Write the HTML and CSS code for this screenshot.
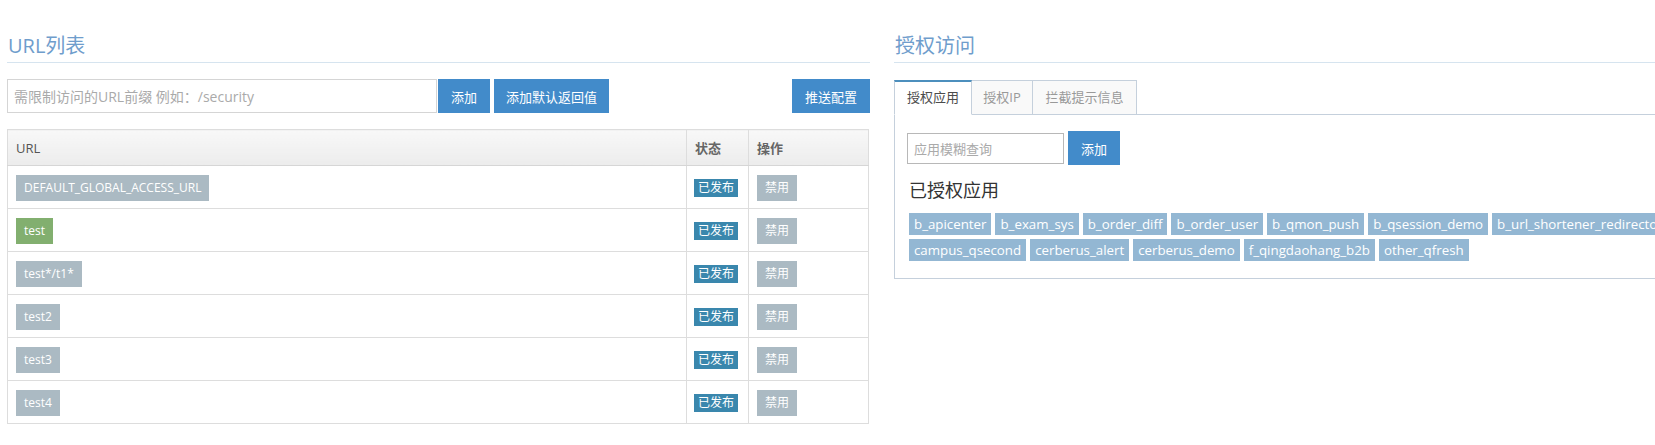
FILE: index.html
```html
<!DOCTYPE html>
<html lang="zh-CN">
<head>
<meta charset="utf-8">
<title>URL列表</title>
<link rel="stylesheet" href="styles.css">
</head>
<body>
<div class="page">
  <section class="col">
    <h3 class="header">URL列表</h3>
    <div class="toolbar">
      <input class="url-input" type="text" placeholder="需限制访问的URL前缀 例如：/security">
      <button class="btn btn-primary btn-add">添加</button>
      <button class="btn btn-primary">添加默认返回值</button>
      <span class="spacer"></span>
      <button class="btn btn-primary">推送配置</button>
    </div>
    <table class="tbl">
      <thead>
        <tr>
          <th class="c-url">URL</th>
          <th class="c-status cjk-bold">状态</th>
          <th class="c-op cjk-bold">操作</th>
        </tr>
      </thead>
      <tbody>
        <tr><td><span class="lbl lbl-grey">DEFAULT_GLOBAL_ACCESS_URL</span></td><td><span class="badge">已发布</span></td><td><span class="btn-dis">禁用</span></td></tr>
        <tr><td><span class="lbl lbl-green">test</span></td><td><span class="badge">已发布</span></td><td><span class="btn-dis">禁用</span></td></tr>
        <tr><td><span class="lbl lbl-grey">test*/t1*</span></td><td><span class="badge">已发布</span></td><td><span class="btn-dis">禁用</span></td></tr>
        <tr><td><span class="lbl lbl-grey">test2</span></td><td><span class="badge">已发布</span></td><td><span class="btn-dis">禁用</span></td></tr>
        <tr><td><span class="lbl lbl-grey">test3</span></td><td><span class="badge">已发布</span></td><td><span class="btn-dis">禁用</span></td></tr>
        <tr><td><span class="lbl lbl-grey">test4</span></td><td><span class="badge">已发布</span></td><td><span class="btn-dis">禁用</span></td></tr>
      </tbody>
    </table>
  </section>
  <section class="col">
    <h3 class="header">授权访问</h3>
    <ul class="tabs">
      <li class="tab active">授权应用</li>
      <li class="tab">授权IP</li>
      <li class="tab">拦截提示信息</li>
    </ul>
    <div class="tab-content">
      <div class="search-row">
        <input class="app-input" type="text" placeholder="应用模糊查询">
        <button class="btn btn-primary btn-add">添加</button>
      </div>
      <h4 class="sub">已授权应用</h4>
      <div class="tags">
        <span class="tag">b_apicenter</span>
        <span class="tag">b_exam_sys</span>
        <span class="tag">b_order_diff</span>
        <span class="tag">b_order_user</span>
        <span class="tag">b_qmon_push</span>
        <span class="tag">b_qsession_demo</span>
        <span class="tag">b_url_shortener_redirector</span>
        <span class="tag">campus_qsecond</span>
        <span class="tag">cerberus_alert</span>
        <span class="tag">cerberus_demo</span>
        <span class="tag">f_qingdaohang_b2b</span>
        <span class="tag">other_qfresh</span>
      </div>
    </div>
  </section>
</div>
</body>
</html>
```

FILE: styles.css
```css
html, body {
  margin: 0;
  padding: 0;
  background: #fff;
  overflow: hidden;
}
body {
  font-family: "Open Sans", "Noto Sans CJK SC", sans-serif;
  font-size: 13px;
  color: #393939;
}
.page {
  display: flex;
  gap: 24px;
  padding: 0 0 0 7px;
  width: 1760px;
}
.col {
  width: 863px;
  flex: none;
}
.header {
  margin: 32px 0 0;
  padding: 0 0 2px 1px;
  font-size: 20px;
  line-height: 28px;
  font-weight: 400;
  color: #6f9dcc;
  border-bottom: 1px solid #d6e4ef;
}
.toolbar {
  display: flex;
  align-items: stretch;
  margin-top: 16px;
  height: 34px;
}
.url-input {
  width: 430px;
  box-sizing: border-box;
  border: 1px solid #d5d5d5;
  padding: 0 6px;
  font: 14px "Open Sans", "Noto Sans CJK SC", sans-serif;
  color: #858585;
  outline: none;
}
.url-input::placeholder, .app-input::placeholder {
  color: #aaa;
}
.btn {
  border: none;
  font: 13px "Noto Sans CJK SC", sans-serif;
  color: #fff;
  padding: 0 12px;
  margin: 0;
  cursor: pointer;
}
.btn-primary {
  background: #428bca;
}
.toolbar .btn-add {
  margin-left: 1px;
  margin-right: 4px;
  width: 52px;
}
.toolbar .btn {
  height: 34px;
}
.spacer {
  flex: 1;
}
.toolbar .btn:last-child {
  width: 78px;
  padding: 0;
}
.tbl {
  margin-top: 16px;
  width: 862px;
  border-collapse: collapse;
  border: 1px solid #ddd;
}
.tbl th {
  height: 35px;
  padding: 0 8px;
  text-align: left;
  font-weight: 400;
  color: #555;
  background: linear-gradient(#f8f8f8, #ececec);
  border: 1px solid #ddd;
  border-bottom: 1px solid #d6d6d6;
}
.tbl th.cjk-bold {
  font-weight: 700;
  color: #666;
}
.c-status { width: 45px; }
.c-op { width: 103px; }
.tbl td {
  height: 43px;
  box-sizing: border-box;
  padding: 1px 8px 0 8px;
  border: 1px solid #ddd;
  vertical-align: middle;
}
.tbl td:nth-child(2) { padding-left: 7px; }
.lbl {
  display: inline-block;
  height: 26px;
  line-height: 26px;
  padding: 0 8px;
  font-size: 12px;
  color: #fff;
}
.lbl-grey { background: #abbac3; }
.lbl-green { background: #82af6f; }
.badge {
  display: inline-block;
  height: 18px;
  line-height: 18px;
  padding: 0 4px;
  font-size: 12px;
  color: #fff;
  background: #3a87ad;
  margin-top: -2px;
}
.btn-dis {
  display: inline-block;
  width: 40px;
  height: 26px;
  line-height: 26px;
  text-align: center;
  font-size: 12px;
  color: #fff;
  background: #abbac3;
}
.tabs {
  list-style: none;
  margin: 17px 0 0;
  padding: 0;
  display: flex;
  height: 35px;
}
.tab {
  box-sizing: border-box;
  height: 35px;
  line-height: 33px;
  padding: 0 12px;
  color: #999;
  background: #f9f9f9;
  border: 1px solid #c5d0dc;
  border-left: none;
  font-size: 13px;
}
.tab:first-child {
  border-left: 1px solid #c5d0dc;
}
.tab.active {
  width: 78px;
  padding: 0;
  text-align: center;
  color: #4c4c4c;
  background: #fff;
  border-top: 2px solid #4c8fbd;
  border-bottom-color: #fff;
  line-height: 31px;
}
.tab:nth-child(2) { width: 61px; padding: 0; text-align: center; }
.tab:nth-child(3) { width: 104px; padding: 0; text-align: center; }
.tab-content {
  margin-top: -1px;
  border: 1px solid #c5d0dc;
  padding: 16px 14px 17px 12px;
}
.search-row {
  display: flex;
  align-items: center;
  height: 34px;
}
.app-input {
  width: 157px;
  height: 31px;
  box-sizing: border-box;
  border: 1px solid #b8b8b8;
  padding: 0 6px;
  font: 13px "Noto Sans CJK SC", sans-serif;
  margin-right: 4px;
  outline: none;
}
.search-row .btn {
  height: 34px;
  width: 52px;
  padding: 0;
}
.sub {
  margin: 12px 0 0 2px;
  font-size: 18px;
  line-height: 26px;
  font-weight: 400;
  color: #333;
}
.tags {
  margin: 10px 0 0 2px;
  display: flex;
  flex-wrap: wrap;
  gap: 4px;
}
.tag {
  display: inline-block;
  height: 22px;
  line-height: 22px;
  padding: 0 5px;
  font-size: 13.3px;
  color: #fff;
  background: #93b7d3;
  white-space: nowrap;
}
```
